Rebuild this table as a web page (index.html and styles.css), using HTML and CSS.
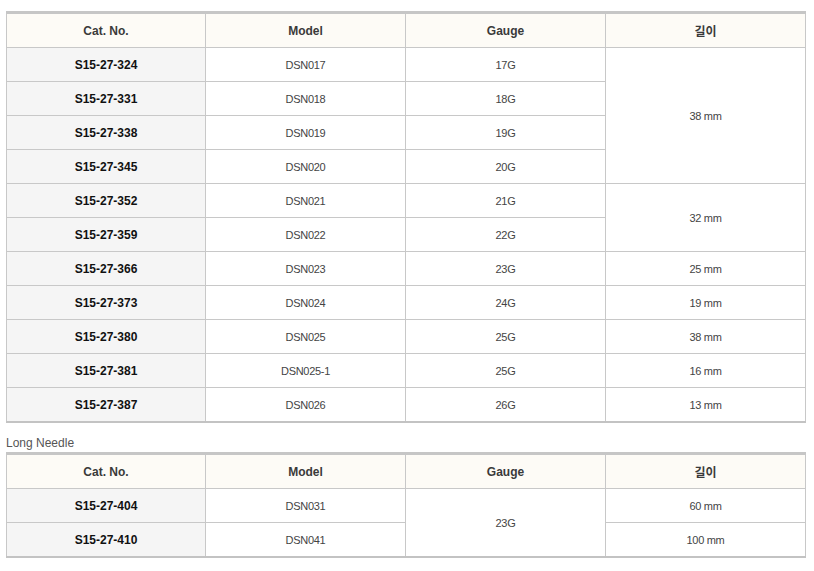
FILE: index.html
```html
<!DOCTYPE html>
<html lang="ko">
<head>
<meta charset="utf-8">
<link rel="stylesheet" href="styles.css">
</head>
<body>
<div class="page">
  <table class="spec">
    <colgroup><col class="c1"><col class="c2"><col class="c3"><col class="c4"></colgroup>
    <thead>
      <tr><th>Cat. No.</th><th>Model</th><th>Gauge</th><th>길이</th></tr>
    </thead>
    <tbody>
      <tr><td class="cat">S15-27-324</td><td>DSN017</td><td>17G</td><td rowspan="4">38 mm</td></tr>
      <tr><td class="cat">S15-27-331</td><td>DSN018</td><td>18G</td></tr>
      <tr><td class="cat">S15-27-338</td><td>DSN019</td><td>19G</td></tr>
      <tr><td class="cat">S15-27-345</td><td>DSN020</td><td>20G</td></tr>
      <tr><td class="cat">S15-27-352</td><td>DSN021</td><td>21G</td><td rowspan="2">32 mm</td></tr>
      <tr><td class="cat">S15-27-359</td><td>DSN022</td><td>22G</td></tr>
      <tr><td class="cat">S15-27-366</td><td>DSN023</td><td>23G</td><td>25 mm</td></tr>
      <tr><td class="cat">S15-27-373</td><td>DSN024</td><td>24G</td><td>19 mm</td></tr>
      <tr><td class="cat">S15-27-380</td><td>DSN025</td><td>25G</td><td>38 mm</td></tr>
      <tr><td class="cat">S15-27-381</td><td>DSN025-1</td><td>25G</td><td>16 mm</td></tr>
      <tr><td class="cat">S15-27-387</td><td>DSN026</td><td>26G</td><td>13 mm</td></tr>
    </tbody>
  </table>
  <p class="caption">Long Needle</p>
  <table class="spec">
    <colgroup><col class="c1"><col class="c2"><col class="c3"><col class="c4"></colgroup>
    <thead>
      <tr><th>Cat. No.</th><th>Model</th><th>Gauge</th><th>길이</th></tr>
    </thead>
    <tbody>
      <tr><td class="cat">S15-27-404</td><td>DSN031</td><td rowspan="2">23G</td><td>60 mm</td></tr>
      <tr><td class="cat">S15-27-410</td><td>DSN041</td><td>100 mm</td></tr>
    </tbody>
  </table>
</div>
</body>
</html>
```

FILE: styles.css
```css
html, body {
  margin: 0;
  padding: 0;
  background: #ffffff;
}
.page {
  padding: 11px 0 0 6px;
  font-family: "Liberation Sans", "Noto Sans CJK KR", sans-serif;
}
.spec {
  border-collapse: collapse;
  table-layout: fixed;
  width: 800px;
  border-top: 3px solid #c6c6c6;
  border-bottom: 2px solid #c3c3c3;
}
.c1 { width: 199px; }
.c2, .c3, .c4 { width: 200px; }
.spec th, .spec td {
  border: 1px solid #c8c8c8;
  height: 33px;
  padding: 0;
  text-align: center;
  vertical-align: middle;
}
.spec th {
  background: #fdfbf6;
  font-size: 12px;
  font-weight: bold;
  color: #3a3a3a;
}
.spec td {
  font-size: 11px;
  color: #444444;
  letter-spacing: -0.3px;
  background: #ffffff;
}
.spec td.cat {
  background: #f5f5f5;
  font-size: 12px;
  font-weight: bold;
  color: #111111;
  letter-spacing: 0;
}
.caption {
  margin: 13px 0 2px 0;
  font-size: 12px;
  line-height: 14px;
  color: #555555;
}
```
